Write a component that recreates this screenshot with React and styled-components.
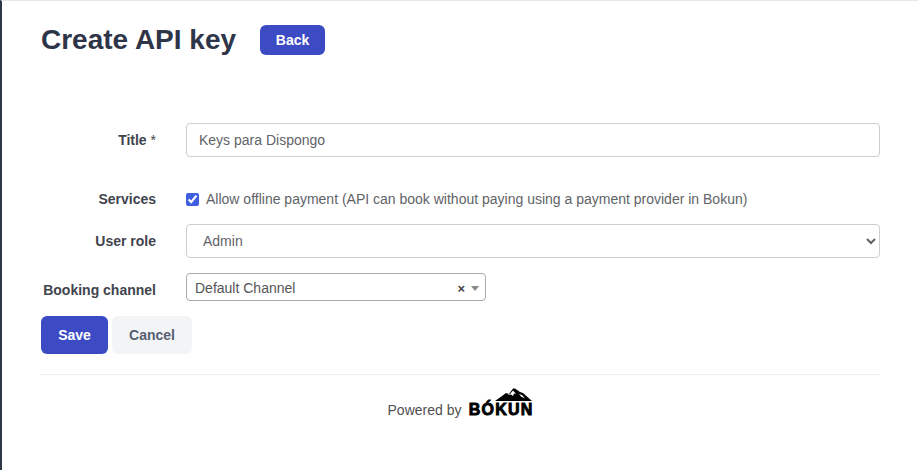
import React from 'react'
import styled, { createGlobalStyle } from 'styled-components'

const GlobalStyle = createGlobalStyle`
  html, body {
    margin: 0;
    padding: 0;
    background: #fff;
  }
  body {
    font-family: 'Liberation Sans', Arial, sans-serif;
    overflow: hidden;
  }
`
const Page = styled.div`
  box-sizing: border-box;
  width: 918px;
  height: 470px;
  border-top: 1px solid #e5e7eb;
  border-left: 2px solid #2d3748;
  padding: 0 38px 0 39px;
`
const Header = styled.div`
  display: flex;
  align-items: center;
  gap: 24px;
  height: 78px;
`
const Heading = styled.h1`
  margin: 0;
  font-size: 28px;
  line-height: 78px;
  font-weight: 700;
  color: #2f3549;
`
const Button = styled.button`
  border: 0;
  border-radius: 6px;
  font-family: inherit;
  font-size: 14px;
  font-weight: 700;
  padding: 0;
  color: ${(p) => (p.$secondary ? '#566072' : '#fff')};
  background: ${(p) => (p.$secondary ? '#f3f4f6' : '#3c4bc4')};
  width: ${(p) => p.$width}px;
  height: ${(p) => p.$height}px;
`
const Form = styled.form`
  display: flex;
  flex-direction: column;
  padding-top: 44px;
`
const Row = styled.div`
  display: grid;
  grid-template-columns: 115px 1fr;
  column-gap: 30px;
  align-items: center;
  margin-bottom: ${(p) => p.$gap}px;
`
const Label = styled.label`
  font-size: 14px;
  font-weight: 700;
  color: #3f444d;
  text-align: right;
  white-space: nowrap;
  padding-top: ${(p) => p.$drop || 0}px;
`
const Required = styled.span`
  font-weight: 400;
`
const TextInput = styled.input`
  box-sizing: border-box;
  width: 100%;
  height: 34px;
  border: 1px solid #ccced1;
  border-radius: 4px;
  padding: 0 12px;
  font-family: inherit;
  font-size: 14px;
  color: #5f6368;
  background: #fff;
`
const CheckRow = styled.label`
  display: flex;
  align-items: center;
  gap: 7px;
  font-size: 14px;
  color: #5f6368;
`
const Check = styled.input`
  margin: 0;
  width: 13px;
  height: 13px;
  accent-color: #3f5fe0;
`
const RoleSelect = styled.select`
  box-sizing: border-box;
  width: 100%;
  height: 34px;
  border: 1px solid #ccced1;
  border-radius: 4px;
  padding: 0 12px;
  font-family: inherit;
  font-size: 14px;
  color: #5f6368;
  background: #fff;
`
const Combo = styled.div`
  box-sizing: border-box;
  display: flex;
  align-items: center;
  width: 300px;
  height: 28px;
  border: 1px solid #aaa;
  border-radius: 4px;
  padding: 2px 4px 0 8px;
  font-size: 14px;
  color: #555;
`
const ComboValue = styled.span`
  flex: 1;
`
const ComboClear = styled.span`
  font-size: 13px;
  font-weight: 700;
  color: #444;
  margin-right: 6px;
`
const ComboArrow = styled.span`
  width: 0;
  height: 0;
  margin-right: 2px;
  border-left: 4px solid transparent;
  border-right: 4px solid transparent;
  border-top: 5px solid #888;
`
const Actions = styled.div`
  display: flex;
  gap: 4px;
`
const Footer = styled.div`
  display: flex;
  align-items: flex-end;
  justify-content: center;
  gap: 6px;
  margin-top: 20px;
  padding-top: 13px;
  border-top: 1px solid #eceef0;
  font-size: 14px;
  color: #505050;
`
const Powered = styled.span`
  line-height: 16px;
`
const LogoWrap = styled.div`
  display: flex;
  flex-direction: column;
  align-items: flex-end;
  width: 66px;
  padding-bottom: 2px;
`
const Mountain = styled.svg`
  display: block;
  margin: 0 1px 2px 0;
`
const LogoText = styled.span`
  font-size: 16px;
  font-weight: 700;
  line-height: 13px;
  color: #000;
  -webkit-text-stroke: 0.9px #000;
  letter-spacing: 1.2px;
  white-space: nowrap;
`

function MountainIcon() {
  return (
    <Mountain width='37' height='13' viewBox='0 0 37 13'>
      <path d='M0 13 L7 8 L11 5 L14 6 L18 0.5 L20 0.5 L25 4 L28 5 L37 13 Z' fill='#000' />
      <path d='M12 7 L15 6 L18 2.5 L21 6 L19 5.5 L18 8 L16 6.5 Z' fill='#fff' />
      <path d='M24 6 L27 7 L30 10.5 L26 8.5 Z' fill='#fff' />
    </Mountain>
  )
}

function App() {
  return (
    <Page>
      <GlobalStyle />
      <Header>
        <Heading>Create API key</Heading>
        <Button type='button' $width={65} $height={30}>Back</Button>
      </Header>
      <Form>
        <Row $gap={34}>
          <Label>Title <Required>*</Required></Label>
          <TextInput defaultValue='Keys para Dispongo' />
        </Row>
        <Row $gap={17}>
          <Label>Services</Label>
          <CheckRow>
            <Check type='checkbox' defaultChecked />
            Allow offline payment (API can book without paying using a payment provider in Bokun)
          </CheckRow>
        </Row>
        <Row $gap={15}>
          <Label>User role</Label>
          <RoleSelect defaultValue='admin'>
            <option value='admin'>Admin</option>
          </RoleSelect>
        </Row>
        <Row $gap={15}>
          <Label $drop={6}>Booking channel</Label>
          <Combo>
            <ComboValue>Default Channel</ComboValue>
            <ComboClear>×</ComboClear>
            <ComboArrow />
          </Combo>
        </Row>
        <Actions>
          <Button type='button' $width={67} $height={38}>Save</Button>
          <Button type='button' $secondary $width={80} $height={38}>Cancel</Button>
        </Actions>
      </Form>
      <Footer>
        <Powered>Powered by</Powered>
        <LogoWrap>
          <MountainIcon />
          <LogoText>BÓKUN</LogoText>
        </LogoWrap>
      </Footer>
    </Page>
  )
}

export default App
